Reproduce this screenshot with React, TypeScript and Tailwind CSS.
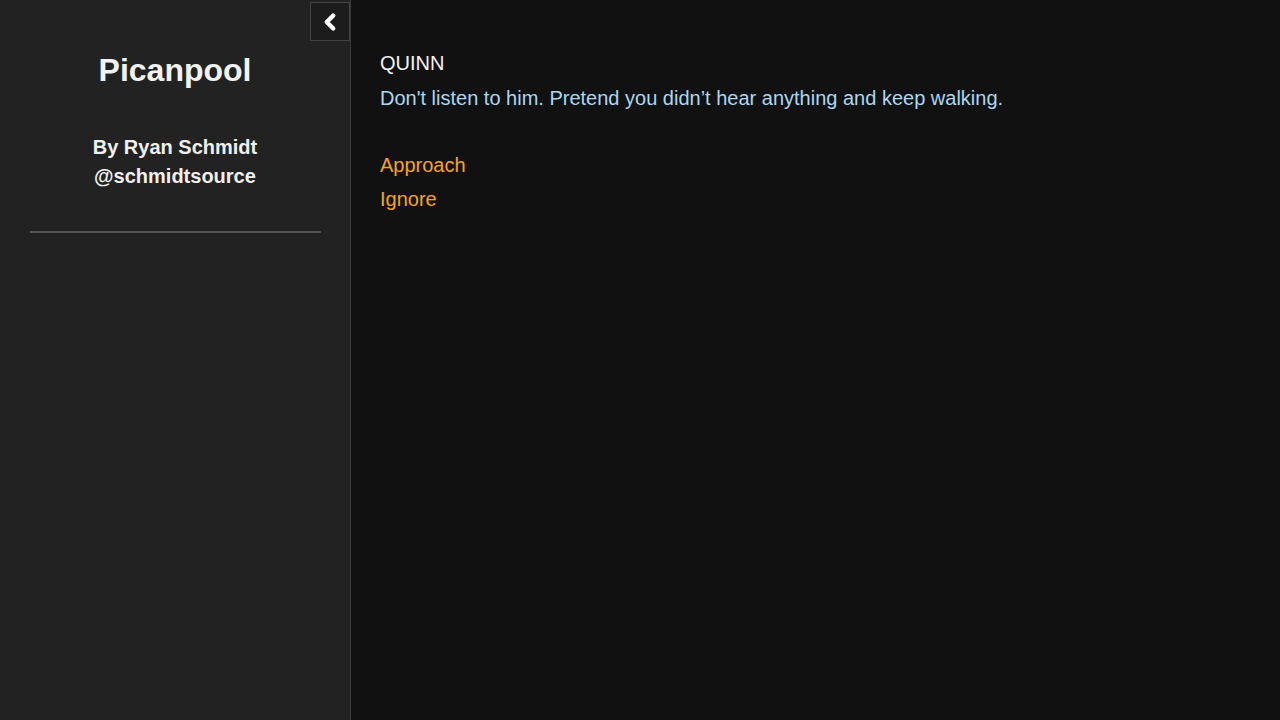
import { ChevronLeft } from "lucide-react";

export default function App() {
  return (
    <div className="flex h-[720px] w-[1280px] overflow-hidden bg-[#111111] font-['Liberation_Sans',Arial,sans-serif]">
      <aside className="relative flex w-[351px] shrink-0 flex-col items-center border-r border-[#3a3a3a] bg-[#222222]">
        <button
          type="button"
          className="absolute right-0 top-[2px] flex h-[39px] w-[40px] items-center justify-center border border-[#444444] bg-[#1c1c1c] text-white"
        >
          <ChevronLeft size={26} strokeWidth={4} />
        </button>
        <h1 className="mt-[51px] text-[32px] font-bold leading-[38px] text-[#f2f2f2]">Picanpool</h1>
        <div className="mt-[44px] text-center text-[20px] font-bold leading-[29px] text-[#f0f0f0]">
          <p>By Ryan Schmidt</p>
          <p>@schmidtsource</p>
        </div>
        <hr className="mt-[40px] h-0 w-[291px] border-0 border-t-2 border-[#555555]" />
      </aside>

      <main className="flex-1 pl-[29px] pt-[51px]">
        <p className="text-[20px] leading-[24px] text-[#f4f4f4]">QUINN</p>
        <p className="mt-[11px] text-[20px] leading-[24px] text-[#a9d8f2]">
          Don't listen to him. Pretend you didn’t hear anything and keep walking.
        </p>
        <div className="mt-[43px] flex flex-col gap-[10px] text-[20px] leading-[24px] text-[#f5a41f]">
          <span>Approach</span>
          <span>Ignore</span>
        </div>
      </main>
    </div>
  );
}
